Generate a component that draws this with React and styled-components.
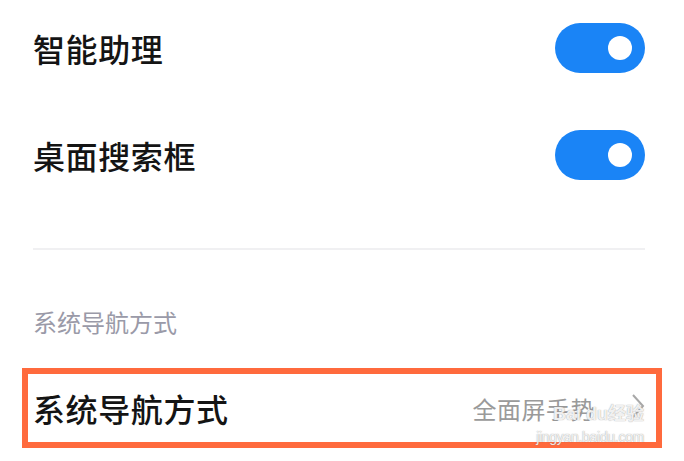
import React from "react";
import styled, { createGlobalStyle } from "styled-components";

const GlobalStyle = createGlobalStyle`
  html, body {
    margin: 0;
    padding: 0;
    background: #fff;
  }
  body {
    font-family: "Noto Sans CJK SC", "Noto Sans", sans-serif;
  }
`;

const Toggle = ({ on }) => (
  <Track on={on}>
    <Knob />
  </Track>
);

const Chevron = () => (
  <svg width="14" height="26" viewBox="0 0 14 26">
    <path d="M2 2 L12 13 L2 24" fill="none" stroke="#a8a8a8" strokeWidth="2" />
  </svg>
);

const App = () => {
  return (
    <>
      <GlobalStyle />
      <Page>
        <SwitchRow>
          <Title>智能助理</Title>
          <Toggle on />
        </SwitchRow>
        <SwitchRow>
          <Title>桌面搜索框</Title>
          <Toggle on />
        </SwitchRow>
        <Divider />
        <SectionLabel>系统导航方式</SectionLabel>
        <Highlight>
          <NavRow>
            <Title>系统导航方式</Title>
            <Value>
              <span>全面屏手势</span>
              <Chevron />
            </Value>
          </NavRow>
          <Watermark>
            <WatermarkLogo>Bai du经验</WatermarkLogo>
            <WatermarkUrl>jingyan.baidu.com</WatermarkUrl>
          </Watermark>
        </Highlight>
      </Page>
    </>
  );
};

export default App;

const Page = styled.div`
  width: 684px;
  height: 461px;
  box-sizing: border-box;
  padding: 23px 0 0;
  display: flex;
  flex-direction: column;
  overflow: hidden;
`;

const SwitchRow = styled.div`
  height: 50px;
  margin: 0 39px 57px 33px;
  display: flex;
  align-items: center;
  justify-content: space-between;

  &:nth-of-type(2) {
    margin-bottom: 0;
  }
`;

const Title = styled.div`
  font-size: 32px;
  line-height: 34px;
  font-weight: 500;
  color: #141414;
  letter-spacing: 0.6px;
`;

const Track = styled.div`
  width: 90px;
  height: 50px;
  border-radius: 25px;
  background: ${props => (props.on ? "#1a84f6" : "#d9d9d9")};
  display: flex;
  align-items: center;
  justify-content: ${props => (props.on ? "flex-end" : "flex-start")};
  padding: 0 13px;
  box-sizing: border-box;
`;

const Knob = styled.div`
  width: 24px;
  height: 24px;
  border-radius: 50%;
  background: #fff;
`;

const Divider = styled.div`
  height: 2px;
  background: #f0f0f2;
  margin: 68px 39px 0 33px;
`;

const SectionLabel = styled.div`
  margin: 56px 0 0 33px;
  font-size: 24px;
  line-height: 32px;
  color: #9a9aa8;
`;

const Highlight = styled.div`
  position: relative;
  margin: 30px 22px 0;
  height: 80px;
  box-sizing: border-box;
  border: 6px solid #ff6a3d;
`;

const NavRow = styled.div`
  height: 100%;
  display: flex;
  align-items: center;
  justify-content: space-between;
  padding: 0 11px 0 5px;
`;

const Value = styled.div`
  display: flex;
  align-items: center;
  gap: 36px;
  font-size: 24px;
  color: #9a9a9a;
  letter-spacing: 0.5px;

  svg {
    margin-top: -4px;
  }
`;

const Watermark = styled.div`
  position: absolute;
  right: 12px;
  top: 31px;
  display: flex;
  flex-direction: column;
  align-items: flex-end;
  font-family: "Liberation Sans", "Noto Sans CJK SC", sans-serif;
  color: rgba(255, 255, 255, 0.85);
  text-shadow: 0 0 1px rgba(130, 130, 130, 0.5), 0 0 1px rgba(130, 130, 130, 0.5);
  pointer-events: none;
`;

const WatermarkLogo = styled.div`
  font-size: 18px;
  line-height: 18px;
  font-weight: 700;
`;

const WatermarkUrl = styled.div`
  font-size: 14px;
  line-height: 14px;
  margin-top: 7px;
  letter-spacing: -0.3px;
`;
